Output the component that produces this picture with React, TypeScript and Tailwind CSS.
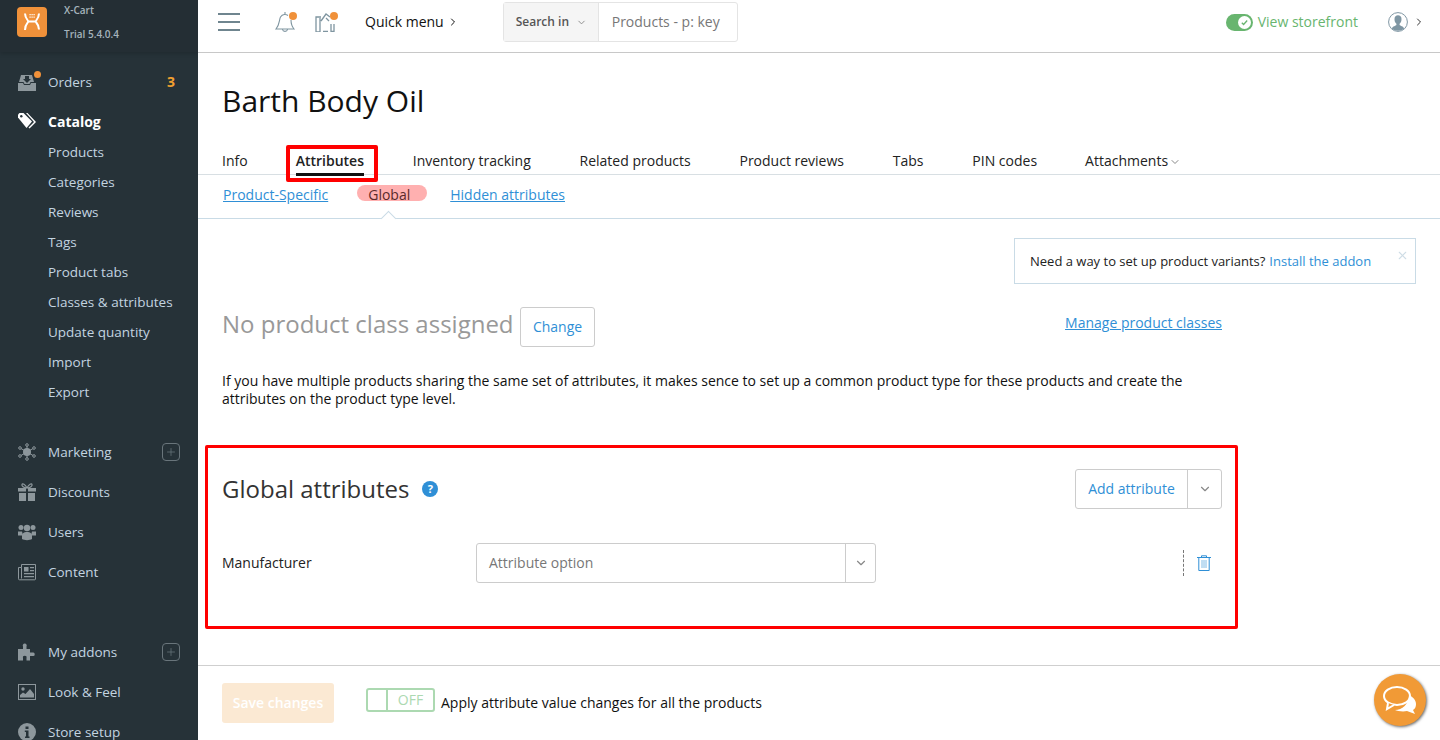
import React from 'react';
import { ChevronDown, ChevronRight, Plus, X } from 'lucide-react';

const Icon: React.FC<{ children: React.ReactNode; className?: string; viewBox?: string }> = ({ children, className = 'h-[18px] w-[18px]', viewBox = '0 0 18 18' }) => (
  <svg viewBox={viewBox} className={className}>
    {children}
  </svg>
);

const GRAY = '#8d979c';

const OrdersIcon = () => (
  <Icon>
    <path d="M0 10h5l1 2h6l1-2h5v8H0z" fill={GRAY} />
    <path fillRule="evenodd" d="M3 2h11l2 7h-3.500l-1 2h-5l-1-2H1zM7 3v3H5l4 4 4-4h-2V3z" fill={GRAY} />
  </Icon>
);
const TagsIcon = () => (
  <Icon>
    <path d="M0 4.500V1.500L1.500 0h4L14 8.500 8.500 15z" fill="#fff" />
    <path d="M8 0h1.500L18 9l-6.500 6.500-1-1L16 9z" fill="#fff" />
    <circle cx="3.300" cy="3.300" r="1.200" fill="#263238" />
  </Icon>
);
const MarketingIcon = () => (
  <Icon>
    <g stroke={GRAY} strokeWidth="1" fill="none">
      <path d="M9 3v12M2 5l14 8M16 5L2 13" />
      <circle cx="9" cy="2" r="1.300" fill="#263238" />
      <circle cx="9" cy="16" r="1.300" fill="#263238" />
      <circle cx="2" cy="5" r="1.300" fill="#263238" />
      <circle cx="16" cy="5" r="1.300" fill="#263238" />
      <circle cx="2" cy="13" r="1.300" fill="#263238" />
      <circle cx="16" cy="13" r="1.300" fill="#263238" />
    </g>
    <circle cx="9" cy="9" r="4" fill={GRAY} />
  </Icon>
);
const GiftIcon = () => (
  <Icon>
    <path d="M0 5h8v3.500H0zM10 5h8v3.500h-8zM1 10h7v8H1zM10 10h7v8h-7z" fill={GRAY} />
    <path d="M9 5C7 1 4.500 0 4 1.500S5.500 5 9 5c3.500 0 5.500-2 5-3.500S11 1 9 5z" stroke={GRAY} strokeWidth="1.200" fill="none" />
  </Icon>
);
const UsersIcon = () => (
  <Icon>
    <g fill={GRAY}>
      <circle cx="3" cy="4.500" r="2.500" />
      <circle cx="15" cy="4.500" r="2.500" />
      <circle cx="9" cy="5" r="3.200" />
      <path d="M0 8.500h4l1 4H0zM14 8.500h4v4h-5z" />
      <path d="M4 16v-3c0-3 2-4 5-4s5 1 5 4v3c-2 1.500-8 1.500-10 0z" />
    </g>
  </Icon>
);
const ContentIcon = () => (
  <Icon>
    <path d="M3.500 1.500h14v14.500a.8.8 0 0 1-.8.8H1.500a1 1 0 0 1-1-1V4.500h3z" stroke={GRAY} fill="none" />
    <path d="M3.500 4.500v11" stroke={GRAY} />
    <path d="M6 4h4.500v4.500H6zM12 4h4v1.200h-4zM12 7h4v1.200h-4zM6 10h10v1.200H6zM6 13h10v1.200H6z" fill={GRAY} />
  </Icon>
);
const AddonsIcon = () => (
  <Icon>
    <path d="M0 6h5V3.500a2 2 0 1 1 3.500 0V6H12v3.500h2.500a1.800 1.800 0 1 1 0 3.500H12v4.500H8.500V15a1.800 1.800 0 1 0-3.500 0v2.500H0z" fill={GRAY} />
  </Icon>
);
const ImageIcon = () => (
  <Icon>
    <rect x="0.500" y="1.500" width="17" height="15" stroke={GRAY} fill="none" />
    <path d="M2 14.500V12l3-2.500 2.500 1.500L12 6l4 5v3.500z" fill={GRAY} />
    <circle cx="5" cy="6" r="1.700" fill={GRAY} />
  </Icon>
);
const InfoIcon = () => (
  <Icon>
    <circle cx="9" cy="9" r="9" fill={GRAY} />
    <path d="M7.500 3.500h3v2.500h-3zM6.800 7.500h3.700v6h1v1.500H7v-1.500h1v-4.500H6.800z" fill="#263238" />
  </Icon>
);

const mainItems = [
  { label: 'Marketing', icon: <MarketingIcon />, plus: true },
  { label: 'Discounts', icon: <GiftIcon /> },
  { label: 'Users', icon: <UsersIcon /> },
  { label: 'Content', icon: <ContentIcon /> },
];
const lowerItems = [
  { label: 'My addons', icon: <AddonsIcon />, plus: true },
  { label: 'Look & Feel', icon: <ImageIcon /> },
  { label: 'Store setup', icon: <InfoIcon /> },
];
const catalogLinks = ['Products', 'Categories', 'Reviews', 'Tags', 'Product tabs', 'Classes & attributes', 'Update quantity', 'Import', 'Export'];
const tabs = ['Inventory tracking', 'Related products', 'Product reviews', 'Tabs', 'PIN codes'];

const NavRow: React.FC<{ label: string; icon: React.ReactNode; plus?: boolean }> = ({ label, icon, plus }) => (
  <div className="flex h-10 items-center pl-[18px] pr-[18px] text-[#c3d4e0]">
    <span className="mr-3 flex w-[18px] justify-center">{icon}</span>
    <span className="flex-1">{label}</span>
    {plus && (
      <span className="flex h-[18px] w-[18px] items-center justify-center rounded-[4px] border border-[#69757b] text-[#69757b]">
        <Plus size={12} strokeWidth={1.500} />
      </span>
    )}
  </div>
);

const Sidebar = () => (
  <aside className="h-full w-[198px] shrink-0 overflow-hidden bg-[#263238] text-[13.5px]">
    <div className="flex h-[52px] bg-[#242e34] pl-[17px] shadow-[0_2px_4px_rgba(0,0,0,0.15)]">
      <div className="mt-[7px] flex h-[30px] w-[30px] items-center justify-center rounded-[4px] bg-[#f0913a]">
        <svg viewBox="0 0 20 20" className="h-5 w-5">
          <path d="M3 1.500c0 4 2 6 3.500 8C5 11.500 3 13 3 18M17 1.500c0 4-2 6-3.500 8 1.500 2 3.500 3.500 3.500 8M6 9.500h8" stroke="#fff" strokeWidth="2" fill="none" />
          <path d="M7.500 2h1.200v1.200H7.500zM9.500 2h1.200v1.200H9.500zM11.500 2h1.200v1.200h-1.200zM7.500 4.500h1.200v1.200H7.500zM9.500 4.500h1.200v1.200H9.500zM11.500 4.500h1.200v1.200h-1.200z" fill="#fff" />
        </svg>
      </div>
      <div className="ml-[17px] text-[10px] font-semibold text-[#a6b4bd]">
        <div className="mt-[3px] leading-[14px]">X-Cart</div>
        <div className="mt-[10px] leading-[14px]">Trial 5.4.0.4</div>
      </div>
    </div>
    <div className="mt-[10px] flex h-10 items-center pl-[18px] pr-[23px] text-[#c3d4e0]">
      <span className="relative mr-3 flex w-[18px] justify-center">
        <OrdersIcon />
        <span className="absolute -right-[5px] -top-[2px] h-[7px] w-[7px] rounded-full bg-[#f0913a]" />
      </span>
      <span className="flex-1">Orders</span>
      <span className="text-sm font-bold text-[#f0a030]">3</span>
    </div>
    <div className="flex h-10 items-center pl-[18px] text-sm font-bold text-white">
      <span className="mr-3 flex w-[18px] justify-center">
        <TagsIcon />
      </span>
      Catalog
    </div>
    <div className="-mt-[5px] pl-12 text-[#c3d4e0]">
      {catalogLinks.map((link) => (
        <div key={link} className="flex h-[30px] items-center">
          {link}
        </div>
      ))}
    </div>
    <div className="mt-[25px]">
      {mainItems.map((item) => (
        <NavRow key={item.label} {...item} />
      ))}
    </div>
    <div className="mt-10">
      {lowerItems.map((item) => (
        <NavRow key={item.label} {...item} />
      ))}
    </div>
  </aside>
);

const TopBar = () => (
  <header className="flex h-[53px] shrink-0 items-center border-b border-[#c8c8c8] bg-white pb-2 text-sm text-[#111]">
    <div className="ml-5 flex w-[22px] flex-col gap-[6px]">
      <span className="h-[2px] bg-[#6f858f]" />
      <span className="h-[2px] bg-[#6f858f]" />
      <span className="h-[2px] bg-[#6f858f]" />
    </div>
    <div className="relative ml-[35px] h-[22px] w-5">
      <svg viewBox="0 0 20 22" className="h-[22px] w-5" fill="none" stroke="#7f95a0" strokeWidth="1.100">
        <path d="M10 1v2.500M13 4.500C11 3 7.500 3 5.500 6 4 9 5 13 1 18h18c-2.500-3-3-6-3-9M7.500 18.500c.5 2.500 4.500 2.500 5 0" />
      </svg>
      <span className="absolute -right-[2px] top-[1px] h-[8px] w-[8px] rounded-full bg-[#f0913a]" />
    </div>
    <div className="relative ml-5 h-5 w-5">
      <svg viewBox="0 0 20 20" className="h-5 w-5" fill="none" stroke="#7f95a0" strokeWidth="1.300">
        <path d="M6 5H1v15h4V6M8 19.300h5M19 12v7.300h-3V12M6 9l5-7 4 3M11 6l3 3" />
      </svg>
      <span className="absolute -right-[3px] top-0 h-[8px] w-[8px] rounded-full bg-[#f0913a]" />
    </div>
    <div className="ml-[30px] flex items-center">
      Quick menu
      <ChevronRight size={12} className="ml-[3px]" />
    </div>
    <div className="ml-[44px] flex h-10 items-center rounded-[3px] border border-[#e4e4e4]">
      <div className="flex h-full w-[94px] items-center gap-1 bg-[#f5f5f5] pl-3 text-xs font-semibold text-[#555]">
        Search in
        <ChevronDown size={11} className="ml-[3px] text-[#888]" />
      </div>
      <div className="w-[139px] border-l border-[#e4e4e4] pl-[13px] leading-[38px] text-[#777]">Products - p: key</div>
    </div>
    <div className="ml-auto flex items-center text-[#68b56f]">
      <span className="flex h-[17px] w-[27px] items-center justify-end rounded-full bg-[#68b56f] pr-[2px]">
        <span className="flex h-[13px] w-[13px] items-center justify-center rounded-full bg-white">
          <svg viewBox="0 0 10 10" className="h-[9px] w-[9px]" fill="none" stroke="#68b56f" strokeWidth="1.400">
            <path d="M2 5.200l2 2 4-4.400" />
          </svg>
        </span>
      </span>
      <span className="ml-[5px]">View storefront</span>
    </div>
    <div className="ml-[30px] mr-[15px] flex items-center">
      <svg viewBox="0 0 20 20" className="h-5 w-5">
        <circle cx="10" cy="10" r="9.400" fill="#fff" stroke="#7f96a3" />
        <path d="M3.800 16.500c1-2.500 3.800-2.500 4.600-3.500v-1.300C7 10.500 6.500 9 6.500 7c0-2.500 1.500-3.700 3.500-3.700S13.500 4.500 13.500 7c0 2-.5 3.500-1.900 4.700V13c.8 1 3.600 1 4.600 3.500-3 3-9.400 3-12.400 0z" fill="#7f96a3" />
      </svg>
      <ChevronRight size={12} strokeWidth={2} className="ml-[5px] text-[#333]" />
    </div>
  </header>
);

const Tabs = () => (
  <div className="mt-[30px] flex h-6 shrink-0 items-start border-b border-[#d8dfe3] pl-6 text-sm text-[#222]">
    <span className="leading-[20px]">Info</span>
    <div className="relative ml-[48px] leading-[20px]">
      <span className="font-semibold">Attributes</span>
      <span className="absolute inset-x-0 top-[22px] h-[3px] bg-[#111]" />
      <span className="absolute -left-[10px] -right-[14px] -top-[6px] h-[37px] rounded-[2px] border-4 border-[#f00]" />
    </div>
    {tabs.map((tab) => (
      <span key={tab} className="ml-[48.8px] leading-[20px]">
        {tab}
      </span>
    ))}
    <span className="ml-[48px] flex items-center leading-[20px]">
      Attachments
      <ChevronDown size={12} className="ml-[1px] mt-[2px] text-[#888]" />
    </span>
  </div>
);

const SubTabs = () => (
  <div className="relative flex h-[44px] shrink-0 items-start border-b border-[#c9dbe6] pl-[25px] pt-[10px] text-sm leading-[19px]">
    <a className="text-[#2f8fd6] underline">Product-Specific</a>
    <span className="ml-[29px] h-4 rounded-full bg-[#ffb0b0] pl-[11px] pr-[17px] leading-[20px] text-[#5a2a2a]">Global</span>
    <a className="ml-[23px] text-[#2f8fd6] underline">Hidden attributes</a>
    <span className="absolute left-[185px] top-[38px] h-[11px] w-[11px] rotate-45 border-l border-t border-[#c9dbe6] bg-white" />
  </div>
);

const ProductClass = () => (
  <div className="relative shrink-0 pl-6">
    <div className="absolute right-6 top-[19px] flex h-[46px] w-[402px] items-center border border-[#c9dbe6] pl-[15px] pt-[2px] text-[13px] text-[#222]">
      Need a way to set up product variants?
      <a className="ml-1 text-[#2f8fd6]">Install the addon</a>
      <X size={13} className="absolute right-[6px] top-[10px] text-[#cfdde6]" />
    </div>
    <div className="flex w-[1000px] items-center justify-between pt-[88px]">
      <div className="flex items-center">
        <span className="mb-[6px] text-2xl text-[#999]">No product class assigned</span>
        <span className="ml-[6px] flex h-10 w-[75px] items-center justify-center rounded-[3px] border border-[#ccc] pl-px text-sm text-[#2f8fd6]">Change</span>
      </div>
      <a className="-mt-2 text-sm text-[#2f8fd6] underline">Manage product classes</a>
    </div>
    <p className="mt-[25px] w-[1000px] text-sm leading-[18px] text-[#111]">
      If you have multiple products sharing the same set of attributes, it makes sence to set up a common product type for these products and create the attributes on the product type level.
    </p>
  </div>
);

const GlobalAttributes = () => (
  <section className="ml-[7px] mt-[37px] h-[184px] w-[1033px] shrink-0 rounded-[2px] border-[3px] border-[#f00] pl-[14px] pr-[13px] pt-[21px]">
    <div className="flex items-center justify-between">
      <div className="flex items-center">
        <h2 className="text-2xl text-[#333]">Global attributes</h2>
        <span className="ml-[13px] flex h-4 w-4 items-center justify-center rounded-full bg-[#2f8fd6] text-[11px] font-bold text-white">?</span>
      </div>
      <div className="flex h-10 w-[147px] rounded-[3px] border border-[#ccc] text-sm text-[#2f8fd6]">
        <span className="flex w-[111px] items-center justify-center">Add attribute</span>
        <span className="flex flex-1 items-center justify-center border-l border-[#ccc] text-[#888]">
          <ChevronDown size={14} />
        </span>
      </div>
    </div>
    <div className="mt-[34px] flex items-center text-sm text-[#222]">
      <span className="w-[254px]">Manufacturer</span>
      <div className="flex h-10 w-[400px] rounded-[3px] border border-[#ccc] text-[#777]">
        <span className="flex flex-1 items-center pl-3">Attribute option</span>
        <span className="flex w-[30px] items-center justify-center border-l border-[#ccc] text-[#888]">
          <ChevronDown size={14} />
        </span>
      </div>
      <span className="ml-[307px] h-[26px] border-l border-dashed border-[#777]" />
      <svg viewBox="0 0 14 16" className="ml-[13px] h-4 w-[14px]" fill="none" stroke="#2f8fd6">
        <path d="M0 2.500h14M4.500 2.500V.8h5v1.700M1.800 2.500v13h10.400v-13" />
        <path d="M5 5v8M7 5v8M9 5v8" strokeOpacity="0.6" />
      </svg>
    </div>
  </section>
);

const Footer = () => (
  <div className="mt-[36px] flex h-[75px] shrink-0 items-start border-t border-[#cfcfcf] pl-6 pt-[17px] text-sm text-[#111]">
    <span className="flex h-10 w-28 items-center justify-center rounded-[3px] bg-[#fbe9d3] font-semibold text-white">Save changes</span>
    <div className="ml-8 mt-[5px] flex h-6 w-[69px] rounded-[3px] border-2 border-[#acd9b1] text-[#acd9b1]">
      <span className="w-5 border-r-2 border-[#acd9b1]" />
      <span className="flex-1 text-center leading-[19px]">OFF</span>
    </div>
    <span className="ml-[6px] mt-[10px]">Apply attribute value changes for all the products</span>
  </div>
);

const ChatButton = () => (
  <div className="absolute bottom-[14px] right-[14px] flex h-[52px] w-[52px] items-center justify-center rounded-full bg-[#f19a36] shadow-[1px_1px_3px_rgba(0,0,0,0.6)]">
    <svg viewBox="0 0 36 30" className="h-[30px] w-9">
      <path d="M27 10c4 2 7 5 7 9 0 3-1 5-3 6l2 4-8-3c-4 1-10 0-12-1 7 0 14-6 14-15z" fill="#fff" />
      <ellipse cx="15" cy="11" rx="13" ry="9" fill="none" stroke="#fff" strokeWidth="2" />
      <path d="M6 18l-1 6 7-4" fill="#f19a36" stroke="#fff" strokeWidth="2" />
    </svg>
  </div>
);

const App: React.FC = () => (
  <div className="relative flex h-[740px] w-[1440px] overflow-hidden bg-white font-['Open_Sans',sans-serif]">
    <Sidebar />
    <main className="flex min-w-0 flex-1 flex-col">
      <TopBar />
      <h1 className="ml-6 mt-[27px] shrink-0 text-[30px] leading-[41px] text-[#111]">Barth Body Oil</h1>
      <Tabs />
      <SubTabs />
      <ProductClass />
      <GlobalAttributes />
      <Footer />
    </main>
    <ChatButton />
  </div>
);

export default App;
